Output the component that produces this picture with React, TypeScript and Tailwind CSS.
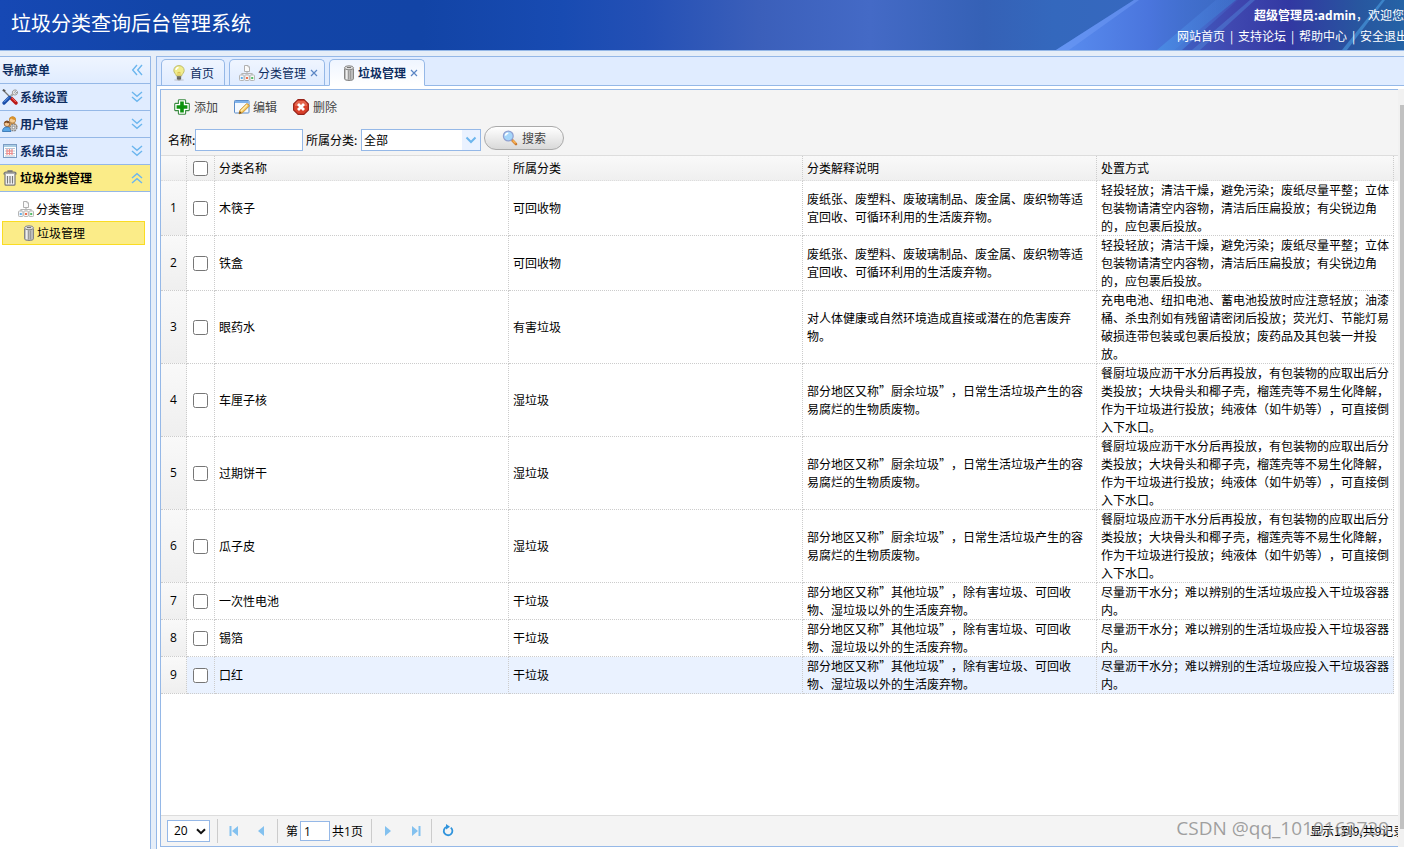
import { type ReactNode, useState } from 'react';

type IconProps = { className?: string };

function BulbIcon() {
  return (
    <svg className="size-4 shrink-0" viewBox="0 0 16 16">
      <ellipse cx="8" cy="15" rx="5" ry="0.9" fill="#c9d0de" />
      <path
        d="M8 .6C4.800.600 2.800 2.800 2.800 5.500c0 2.200 2 3.300 2.700 5.500h5c.7-2.200 2.700-3.300 2.700-5.500C13.200 2.800 11.200.6 8 .6z"
        fill="#f0ec8c"
        stroke="#b9b767"
        strokeWidth=".9"
      />
      <path d="M5 5c.2-1.600 1.200-2.400 2.600-2.600" stroke="#fff" strokeWidth="1.500" fill="none" />
      <path d="M7 10.500V7l1 .8 1-.8v3.500" stroke="#d9b94a" strokeWidth=".8" fill="none" />
      <path d="M5.800 11h4.400v3L9 15.300H7L5.800 14z" fill="#8d8d85" />
      <path d="M6 12.200h4M6 13.600h4" stroke="#4f4f4a" strokeWidth=".7" />
    </svg>
  );
}

function SitemapIcon() {
  return (
    <svg className="size-4 shrink-0" viewBox="0 0 16 16" fill="none">
      <path d="M8 6v3.500M3 10V8.500h10V10" stroke="#b5b5b5" strokeWidth="1.200" />
      <path d="M5.500.5H9l1.500 1.500v4.500h-5z" fill="#fafafa" stroke="#b0b0b0" />
      <path d="M9 .5V2h1.500" stroke="#bbb" />
      <rect x=".5" y="10" width="4.500" height="5.500" rx=".8" fill="#f5f7fa" stroke="#b5b5b5" />
      <rect x="5.800" y="10" width="4.500" height="5.500" rx=".8" fill="#faf6f5" stroke="#b5b5b5" />
      <rect x="11" y="10" width="4.500" height="5.500" rx=".8" fill="#f5faf5" stroke="#b5b5b5" />
      <path d="M1.800 12h2v2h-2z" fill="#5fb0ea" />
      <path d="M7 12h2v2H7z" fill="#f0704e" />
      <path d="M12.200 12h2v2h-2z" fill="#52bb66" />
    </svg>
  );
}

function CanIcon() {
  return (
    <svg className="size-4 shrink-0" viewBox="0 0 16 16" fill="none">
      <path
        d="M5.500 3.500v10.300c0 1 2 1.700 4.500 1.700s4.500-.7 4.500-1.700V3.500"
        fill="#bbb"
        stroke="#858585"
      />
      <path d="M7.700 5v9.200" stroke="#efefef" strokeWidth="1.600" />
      <path d="M9.500 5.500v9M11.500 5.500v9" stroke="#999" />
      <ellipse cx="10" cy="2.800" rx="4.500" ry="2" fill="#ddd" stroke="#858585" />
      <path d="M8 2.500h4" stroke="#777" />
    </svg>
  );
}

function BinIcon() {
  return (
    <svg
      className="size-4 shrink-0"
      viewBox="0 0 16 16"
      fill="none"
      stroke="#777"
      strokeWidth="1.200"
    >
      <path d="M6 2V.8h4V2M2 4c0-1.200.8-1.800 2-1.800h8c1.200 0 2 .6 2 1.800z" fill="#e6e6e6" />
      <path d="M3 4v10.200c0 .6.4 1 1 1h8c.6 0 1-.4 1-1V4" fill="#f7f7f7" />
      <path d="M5.500 6v7.500M8 6v7.500M10.500 6v7.500" />
    </svg>
  );
}

function ToolsIcon() {
  return (
    <svg className="size-4 shrink-0" viewBox="0 0 16 16" fill="none">
      <path d="M2 2l7 7" stroke="#777" strokeWidth="1.300" />
      <path d="M.8.800l2.400 1.400" stroke="#555" strokeWidth="2" />
      <path d="M9.500 9.500l4.500 4.500" stroke="#b81717" strokeWidth="3.400" strokeLinecap="round" />
      <path d="M9.800 9l4 4" stroke="#ff7266" strokeWidth="1" />
      <path d="M8 8l3-3" stroke="#aaa" strokeWidth="2.400" />
      <path
        d="M14.500 1.200l-2 2.200 1 1 2-1.800c.4 2-1 3.600-2.800 3.400-1.500-.2-2.600-1.600-2.300-3C10.700 1.400 12.500.4 14.500 1.200z"
        fill="#e8e8e8"
        stroke="#888"
        strokeWidth=".8"
      />
      <path d="M7.500 8.500L2 14" stroke="#174aa8" strokeWidth="3.200" strokeLinecap="round" />
      <path d="M7 8.300l-5 5" stroke="#6ba5ee" />
    </svg>
  );
}

function UsersIcon() {
  return (
    <svg className="size-4 shrink-0" viewBox="0 0 16 16" fill="none">
      <circle cx="10.500" cy="4" r="3.200" fill="#f5cc92" stroke="#ac7636" strokeWidth=".8" />
      <path d="M7.300 3.800C7.300 1.300 9 .4 10.800.5s3.200 1.300 3 3.400c-2 .2-3.500-.4-4.300-1.400z" fill="#d9922b" />
      <path d="M6.500 11c0-2.800 1.600-3.700 4-3.700s4.500.9 4.500 4z" fill="#f0a94e" stroke="#b06f1e" strokeWidth=".7" />
      <circle cx="5" cy="7.800" r="2.800" fill="#f6c792" stroke="#8a5528" strokeWidth=".8" />
      <path d="M2.200 7.500C2.300 5.500 3.500 4.700 5 4.700s2.800 1 2.800 2.700c-1.600 0-2.500-.2-3.300-.9z" fill="#7c4a22" />
      <path d="M.5 15.500c0-3 1.700-4.500 4.500-4.500s4 1.500 4 4.500z" fill="#5aa7e6" stroke="#2b6cab" strokeWidth=".8" />
      <circle cx="11.500" cy="11.500" r="3.200" fill="#ddd" stroke="#888" strokeWidth="1.600" strokeDasharray="1.700 .8" />
      <circle cx="11.500" cy="11.500" r="1.300" fill="#fff" stroke="#777" strokeWidth=".8" />
    </svg>
  );
}

function LogIcon() {
  return (
    <svg className="size-4 shrink-0" viewBox="0 0 16 16" fill="none">
      <rect x="1.500" y="1.500" width="13" height="13" fill="#fff" stroke="#7b9cc4" />
      <path d="M2 3h12" stroke="#a9cde4" strokeWidth="2" />
      <path d="M3 5.500h10M3 8h10M3 10.500h10M3 13h10" stroke="#b8c6d6" />
      <path d="M5 6v6M7.500 6v6M10 6v6" stroke="#f08c8c" strokeWidth="1.200" />
      <path d="M4.500 8h6M4.500 10.500h6" stroke="#f08c8c" />
    </svg>
  );
}

function AddIcon() {
  return (
    <svg className="size-4 shrink-0" viewBox="0 0 16 16">
      <path
        d="M5 .7h6l.6.6v3.100h3.100l.6.600v6l-.6.600h-3.100v3.100l-.6.600H5l-.6-.6v-3.100H1.300L.7 11V5l.6-.6h3.100V1.300z"
        fill="#fff"
        stroke="#3b8a41"
        strokeWidth="1.100"
        strokeLinejoin="round"
      />
      <path d="M6.200 2.600h3.600v3.600h3.600v3.600H9.800v3.600H6.200V9.800H2.600V6.200h3.600z" fill="#0c920c" />
    </svg>
  );
}

function EditIcon() {
  return (
    <svg className="size-4 shrink-0" viewBox="0 0 16 16" fill="none">
      <rect x=".5" y="1.500" width="14.500" height="12.500" rx=".8" fill="#f4f9ff" stroke="#5b8cc9" />
      <path d="M1 3h13.500" stroke="#7eb2eb" strokeWidth="2" />
      <path
        d="M5 14.800l1-3.600 6.500-6.400c.8-.7 3.300 1.400 2.500 2.500l-6.500 6.500z"
        fill="#f7c75c"
        stroke="#c48a2c"
        strokeWidth=".9"
      />
      <path d="M7 12l6-6" stroke="#fff0b8" strokeWidth="1.200" />
      <path d="M5 14.800l.8-2.600 1.800 1.800z" fill="#6b4518" />
    </svg>
  );
}

function RemoveIcon() {
  return (
    <svg className="size-4 shrink-0" viewBox="0 0 16 16">
      <path
        d="M5 .6h6L15.400 5v6L11 15.400H5L.6 11V5z"
        fill="#d8402a"
        stroke="#97231a"
        strokeWidth="1.100"
        strokeLinejoin="round"
      />
      <path d="M4.500 2h7L14 4.600V7H2V4.600z" fill="#ee7d64" opacity=".6" />
      <path d="M5 5l6 6M11 5l-6 6" stroke="#fff" strokeWidth="2.800" />
    </svg>
  );
}

function SearchIcon() {
  return (
    <svg className="size-4 shrink-0" viewBox="0 0 16 16" fill="none">
      <path d="M10.500 10.500l3.500 3.600" stroke="#c9772a" strokeWidth="2.600" strokeLinecap="round" />
      <path d="M10.600 10.400l3 3" stroke="#f8b255" strokeWidth="1.500" />
      <circle cx="6.300" cy="6" r="4.900" fill="#a5d6fa" stroke="#8fa0d2" strokeWidth="1.200" />
      <path d="M3.400 5.600c.3-1.500 1.300-2.300 2.900-2.400" stroke="#fff" strokeWidth="1.600" />
    </svg>
  );
}

function DoubleArrow({ className = '' }: IconProps) {
  return (
    <svg
      className={`size-4 shrink-0 ${className}`}
      viewBox="0 0 16 16"
      fill="none"
      stroke="#6cb6ee"
      strokeWidth="1.400"
    >
      <path d="M3 3l5 4.300L13 3M3 8l5 4.300L13 8" />
    </svg>
  );
}

// first / prev / next / last glyphs of the pager
function PagerArrow({ bar, className = '' }: IconProps & { bar?: boolean }) {
  return (
    <svg className={`size-4 ${className}`} viewBox="0 0 16 16" fill="#83c1ef">
      {bar ? <path d="M3.500 3h2v10h-2zM12 3v10L6 8z" /> : <path d="M11 3v10L5 8z" />}
    </svg>
  );
}

function HeaderArt() {
  return (
    <svg
      className="absolute inset-y-0 right-0 h-full w-[600px]"
      viewBox="0 0 600 50"
      preserveAspectRatio="none"
    >
      <defs>
        <linearGradient id="beam" x1="0" x2="1">
          <stop offset="0" stopColor="#5a8ef0" />
          <stop offset=".45" stopColor="#4a75dd" />
          <stop offset="1" stopColor="#3f6cc4" stopOpacity="0" />
        </linearGradient>
        <linearGradient id="violet" x1="0" x2="1">
          <stop offset="0" stopColor="#3f62c4" />
          <stop offset=".25" stopColor="#4048b0" />
          <stop offset=".5" stopColor="#3238a2" />
          <stop offset=".8" stopColor="#28569f" />
          <stop offset="1" stopColor="#2563a6" />
        </linearGradient>
        <linearGradient id="streak" x1="0" x2="1">
          <stop offset="0" stopColor="#4a8de4" stopOpacity=".9" />
          <stop offset="1" stopColor="#4a78d8" stopOpacity=".15" />
        </linearGradient>
      </defs>
      <path d="M252 50L330 0h130l-90 50z" fill="url(#beam)" />
      <path d="M252 50L330 0h5l-70 50z" fill="#6f9bf5" opacity=".5" />
      <path d="M370 50L432 0h168v50z" fill="url(#violet)" />
      <path d="M353 50L412 0h22l-56 50z" fill="url(#streak)" />
      <path d="M388 50L446 0h5l-55 50z" fill="#5590e2" opacity=".4" />
      <path d="M538 50L578 0h3l-38 50z" fill="#4b9fe2" opacity=".6" />
    </svg>
  );
}

const menus = [
  { title: '系统设置', icon: <ToolsIcon /> },
  { title: '用户管理', icon: <UsersIcon /> },
  { title: '系统日志', icon: <LogIcon /> },
];

const links = ['网站首页', '支持论坛', '帮助中心', '安全退出'];

const recycle = {
  type: '可回收物',
  desc: '废纸张、废塑料、废玻璃制品、废金属、废织物等适宜回收、可循环利用的生活废弃物。',
  way: '轻投轻放；清洁干燥，避免污染；废纸尽量平整；立体包装物请清空内容物，清洁后压扁投放；有尖锐边角的，应包裹后投放。',
};

const harmful = {
  type: '有害垃圾',
  desc: '对人体健康或自然环境造成直接或潜在的危害废弃物。',
  way: '充电电池、纽扣电池、蓄电池投放时应注意轻放；油漆桶、杀虫剂如有残留请密闭后投放；荧光灯、节能灯易破损连带包装或包裹后投放；废药品及其包装一并投放。',
};

const wet = {
  type: '湿垃圾',
  desc: '部分地区又称”厨余垃圾”，日常生活垃圾产生的容易腐烂的生物质废物。',
  way: '餐厨垃圾应沥干水分后再投放，有包装物的应取出后分类投放；大块骨头和椰子壳，榴莲壳等不易生化降解，作为干垃圾进行投放；纯液体（如牛奶等），可直接倒入下水口。',
};

const dry = {
  type: '干垃圾',
  desc: '部分地区又称”其他垃圾”，除有害垃圾、可回收物、湿垃圾以外的生活废弃物。',
  way: '尽量沥干水分；难以辨别的生活垃圾应投入干垃圾容器内。',
};

const rows = [
  { name: '木筷子', ...recycle },
  { name: '铁盒', ...recycle },
  { name: '眼药水', ...harmful },
  { name: '车厘子核', ...wet },
  { name: '过期饼干', ...wet },
  { name: '瓜子皮', ...wet },
  { name: '一次性电池', ...dry },
  { name: '锡箔', ...dry },
  { name: '口红', ...dry },
];

function Header() {
  return (
    <header className="relative flex h-[51px] shrink-0 items-center justify-between overflow-hidden border-b border-[#95b8e7] bg-[linear-gradient(90deg,#1648b4_0%,#1245a8_12%,#1244a6_30%,#184bb2_40%,#2450b5_46%,#3b5fba_54%,#446ac6_62%,#3561b6_70%,#3468bd_75%,#3d68c4_100%)] text-white">
      <HeaderArt />
      <h1 className="relative pb-1 pl-[11px] text-xl">垃圾分类查询后台管理系统</h1>
      <div className="relative w-[227px] shrink-0 leading-5 whitespace-nowrap">
        <p className="text-right">
          <strong>
            超级管理员:<span className="font-['Open_Sans',sans-serif]">admin</span>
          </strong>
          ，欢迎您
        </p>
        <nav className="flex">
          {links.map((link, i) => (
            <span key={link} className="flex shrink-0">
              {i > 0 && <span className="w-[13px] text-center">|</span>}
              <a href="#">{link}</a>
            </span>
          ))}
        </nav>
      </div>
    </header>
  );
}

function Sidebar() {
  return (
    <aside className="w-[151px] shrink-0 border-t border-r border-[#95b8e7] bg-white">
      <div className="flex h-[27px] items-center justify-between border-b border-[#95b8e7] bg-linear-to-b from-[#eff5ff] to-[#e0ecff] pr-[5px] pl-0.5 font-bold text-[#0e2d5f]">
        导航菜单
        <button type="button" aria-label="收起">
          <DoubleArrow className="rotate-90" />
        </button>
      </div>
      {menus.map((menu) => (
        <button
          key={menu.title}
          type="button"
          className="flex h-[27px] w-full items-center gap-0.5 border-b border-[#95b8e7] bg-[#e0ecff] pr-[5px] pl-0.5 font-bold text-[#0e2d5f]"
        >
          {menu.icon}
          {menu.title}
          <DoubleArrow className="ml-auto" />
        </button>
      ))}
      <button
        type="button"
        className="flex h-[27px] w-full items-center gap-0.5 border-b border-[#95b8e7] bg-[#fbec88] pr-[5px] pl-0.5 font-bold"
      >
        <BinIcon />
        垃圾分类管理
        <DoubleArrow className="ml-auto rotate-180" />
      </button>
      <ul className="py-[5px] pr-[5px] pl-0.5">
        <li>
          <a href="#" className="flex h-6 items-center gap-0.5 pl-4">
            <SitemapIcon />
            分类管理
          </a>
        </li>
        <li>
          <a
            href="#"
            className="flex h-6 items-center gap-0.5 border border-[#fadc23] bg-[#fbec88] pl-4"
          >
            <CanIcon />
            垃圾管理
          </a>
        </li>
      </ul>
    </aside>
  );
}

type TabProps = {
  icon: ReactNode;
  title: string;
  active?: boolean;
  closable?: boolean;
};

function Tab({ icon, title, active, closable }: TabProps) {
  return (
    <div
      className={`flex items-center rounded-t-[5px] border border-[#95b8e7] pr-2.5 pl-[9px] text-[#0e2d5f] ${
        active
          ? '-mb-px border-b-white bg-linear-to-b from-[#eff5ff] to-white font-bold'
          : 'border-b-0 bg-linear-to-b from-[#eff5ff] to-[#e0ecff]'
      }`}
    >
      <button type="button" className="flex items-center gap-[3px]">
        {icon}
        {title}
      </button>
      {closable && (
        <button type="button" aria-label={`关闭${title}`} className="-mr-1 pl-1">
          <svg className="size-2" viewBox="0 0 8 8" stroke="#5b86c4" strokeWidth="1.200">
            <path d="M1 1l6 6M7 1L1 7" />
          </svg>
        </button>
      )}
    </div>
  );
}

function Toolbar() {
  return (
    <div className="shrink-0 bg-[#f4f4f4]">
      <div className="flex h-[34px] items-center gap-4 pl-[13px] text-[#444]">
        <button type="button" className="flex items-center gap-1">
          <AddIcon />
          添加
        </button>
        <button type="button" className="flex items-center gap-[3px]">
          <EditIcon />
          编辑
        </button>
        <button type="button" className="flex items-center gap-1">
          <RemoveIcon />
          删除
        </button>
      </div>
      <form
        className="flex h-[31px] items-center pl-[7px] whitespace-nowrap"
        onSubmit={(e) => e.preventDefault()}
      >
        <label htmlFor="name" className="w-[27px]">
          名称:
        </label>
        <input
          id="name"
          type="text"
          className="mr-[3px] h-[22px] w-[108px] border border-[#95b8e7] bg-white px-1 outline-none"
        />
        <label htmlFor="category" className="w-[55px]">
          所属分类:
        </label>
        <span className="relative mr-[3px]">
          <select
            id="category"
            className="block h-[22px] w-[120px] appearance-none border border-[#95b8e7] bg-white pl-0.5 outline-none"
          >
            <option>全部</option>
            <option>可回收物</option>
            <option>有害垃圾</option>
            <option>湿垃圾</option>
            <option>干垃圾</option>
          </select>
          <span className="pointer-events-none absolute inset-y-px right-px flex w-[18px] items-center justify-center bg-[#eaf2ff]">
            <svg className="h-2 w-3" viewBox="0 0 12 8" fill="none" stroke="#6cb6ee" strokeWidth="2">
              <path d="M1.500 1.500L6 6l4.500-4.500" />
            </svg>
          </span>
        </span>
        <button
          type="submit"
          className="mb-1 flex h-6 w-20 items-center justify-center gap-1 rounded-full border border-[#aaa] bg-linear-to-b from-white to-[#d9d9d9] text-[#444]"
        >
          <SearchIcon />
          搜索
        </button>
      </form>
    </div>
  );
}

function Grid() {
  const [checked, setChecked] = useState<number[]>([]);

  const toggle = (i: number) => {
    setChecked((prev) =>
      prev.includes(i) ? prev.filter((n) => n !== i) : [...prev, i],
    );
  };

  const toggleAll = () => {
    setChecked(checked.length === rows.length ? [] : rows.map((_, i) => i));
  };

  const cell = 'border-r border-b border-dotted border-[#ccc] px-1 py-0';
  const head = 'border-r border-dotted border-[#ccc] px-1 text-left font-normal';

  return (
    <div className="min-h-0 flex-1 overflow-hidden border-t border-[#ddd] bg-[linear-gradient(#f9f9f9,#efefef)] bg-[length:100%_25px] bg-no-repeat">
      <table className="w-[calc(100%-4px)] table-fixed border-separate border-spacing-0 leading-[18px] [text-spacing-trim:space-all]">
        <colgroup>
          <col className="w-[26px]" />
          <col className="w-7" />
          <col />
          <col />
          <col />
          <col className="w-[297px]" />
        </colgroup>
        <thead>
          <tr className="h-[25px] *:border-b *:border-b-[#ddd]">
            <td className={head} />
            <th className={head}>
              <input
                type="checkbox"
                aria-label="全选"
                className="mx-auto block size-[15px]"
                checked={checked.length === rows.length}
                onChange={toggleAll}
              />
            </th>
            <th className={head}>分类名称</th>
            <th className={head}>所属分类</th>
            <th className={head}>分类解释说明</th>
            <th className={head}>处置方式</th>
          </tr>
        </thead>
        <tbody>
          {rows.map((row, i) => (
            <tr key={row.name} className={i === 8 ? 'bg-[#eaf2ff]' : 'bg-white'}>
              <td
                className={`${cell} bg-linear-to-b from-[#f9f9f9] to-[#efefef] text-center font-['Open_Sans',sans-serif]`}
              >
                {i + 1}
              </td>
              <td className={cell}>
                <input
                  type="checkbox"
                  aria-label={row.name}
                  className="mx-auto block size-[15px]"
                  checked={checked.includes(i)}
                  onChange={() => toggle(i)}
                />
              </td>
              <td className={cell}>{row.name}</td>
              <td className={cell}>{row.type}</td>
              <td className={cell}>{row.desc}</td>
              <td className={cell}>{row.way}</td>
            </tr>
          ))}
        </tbody>
      </table>
    </div>
  );
}

function Separator() {
  return <span className="h-6 w-px bg-[#ccc]" />;
}

function Pager() {
  return (
    <div className="relative flex h-[31px] shrink-0 items-center border-t border-[#ddd] bg-[#f4f4f4] pl-1.5 whitespace-nowrap">
      <span className="relative mr-[7px]">
        <select
          aria-label="每页条数"
          className="block h-[22px] w-[43px] appearance-none border border-[#95b8e7] bg-white pl-1.5 font-['Open_Sans',sans-serif] outline-none"
        >
          <option>20</option>
          <option>50</option>
        </select>
        <svg
          className="pointer-events-none absolute top-2 right-1 h-[7px] w-2.5"
          viewBox="0 0 10 7"
          fill="none"
          stroke="#111"
          strokeWidth="2"
        >
          <path d="M1 1.200l4 4 4-4" />
        </svg>
      </span>
      <Separator />
      <div className="flex gap-[11px] px-2">
        <button type="button" aria-label="首页">
          <PagerArrow bar />
        </button>
        <button type="button" aria-label="上一页">
          <PagerArrow />
        </button>
      </div>
      <Separator />
      <label htmlFor="page" className="pr-0.5 pl-2">
        第
      </label>
      <input
        id="page"
        type="text"
        defaultValue="1"
        className="h-5 w-[30px] border border-[#95b8e7] bg-white px-[3px] font-['Open_Sans',sans-serif] outline-none"
      />
      <span className="pr-2 pl-0.5">
        共<span className="font-['Open_Sans',sans-serif]">1</span>页
      </span>
      <Separator />
      <div className="flex gap-3 pr-[7px] pl-2">
        <button type="button" aria-label="下一页">
          <PagerArrow className="rotate-180" />
        </button>
        <button type="button" aria-label="尾页">
          <PagerArrow bar className="rotate-180" />
        </button>
      </div>
      <Separator />
      <button type="button" aria-label="刷新" className="ml-2">
        <svg className="size-4" viewBox="0 0 16 16" fill="none" stroke="#2f93dc" strokeWidth="1.800">
          <path d="M10.800 4.600a4.300 4.300 0 1 1-4.400-.6" />
          <path d="M6 1v5.500l4-2.700z" fill="#2f93dc" stroke="none" />
        </svg>
      </button>
      <span className="ml-auto w-[88px] overflow-hidden">显示1到9,共9记录</span>
      <span className="pointer-events-none absolute right-[9px] bottom-1 font-['Open_Sans',sans-serif] text-[19px] leading-7 text-[#888]/80">
        CSDN @qq_1010162729
      </span>
    </div>
  );
}

function ScrollBar() {
  return (
    <div className="flex w-1.5 shrink-0 flex-col overflow-hidden bg-[#f1f1f1] pt-4 pb-[18px] pl-0.5">
      <div className="flex-1 bg-[#c1c1c1]" />
    </div>
  );
}

export default function App() {
  return (
    <div
      lang="zh-CN"
      className="flex h-screen flex-col overflow-hidden bg-[#e6eef8] font-['Noto_Sans_CJK_SC',sans-serif] text-xs text-black"
    >
      <Header />
      <div className="flex min-h-0 flex-1 gap-[5px] pt-[5px]">
        <Sidebar />
        <main className="flex min-w-0 flex-1 flex-col border-t border-l border-[#95b8e7] bg-white">
          <div className="flex h-[29px] shrink-0 gap-1 border-b border-[#95b8e7] bg-[#e0ecff] pt-0.5 pl-1">
            <Tab icon={<BulbIcon />} title="首页" />
            <Tab icon={<SitemapIcon />} title="分类管理" closable />
            <Tab icon={<CanIcon />} title="垃圾管理" active closable />
          </div>
          <div className="flex min-h-0 flex-1 pt-[3px] pb-0.5 pl-[3px]">
            <section className="flex min-w-0 flex-1 flex-col border-y border-l border-[#95b8e7] bg-white">
              <Toolbar />
              <Grid />
              <Pager />
            </section>
            <ScrollBar />
          </div>
        </main>
      </div>
    </div>
  );
}
